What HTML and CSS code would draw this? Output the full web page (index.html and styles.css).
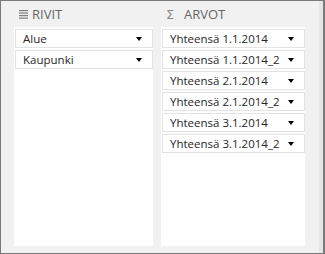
FILE: index.html
```html
<!DOCTYPE html>
<html lang="fi">
<head>
    <meta charset="UTF-8">
    <title>Kenttäluettelo</title>
    <link rel="stylesheet" href="styles.css">
</head>
<body>
    <div class="frame">
        <div class="areas">
            <div class="area">
                <div class="area-head">
                    <svg class="icon-rows" width="9" height="9" viewBox="0 0 9 9">
                        <rect x="0" y="0" width="9" height="1.2" fill="#7f7f7f"/>
                        <rect x="0" y="2.5" width="9" height="1.2" fill="#7f7f7f"/>
                        <rect x="0" y="5" width="9" height="1.2" fill="#7f7f7f"/>
                        <rect x="0" y="7.5" width="9" height="1.2" fill="#7f7f7f"/>
                    </svg>
                    <span class="area-title">RIVIT</span>
                </div>
                <div class="area-box">
                    <div class="field"><span>Alue</span><i class="arrow"></i></div>
                    <div class="field"><span>Kaupunki</span><i class="arrow"></i></div>
                </div>
            </div>
            <div class="area">
                <div class="area-head">
                    <span class="icon-sum">Σ</span>
                    <span class="area-title">ARVOT</span>
                </div>
                <div class="area-box">
                    <div class="field"><span>Yhteensä 1.1.2014</span><i class="arrow"></i></div>
                    <div class="field"><span>Yhteensä 1.1.2014_2</span><i class="arrow"></i></div>
                    <div class="field"><span>Yhteensä 2.1.2014</span><i class="arrow"></i></div>
                    <div class="field"><span>Yhteensä 2.1.2014_2</span><i class="arrow"></i></div>
                    <div class="field"><span>Yhteensä 3.1.2014</span><i class="arrow"></i></div>
                    <div class="field"><span>Yhteensä 3.1.2014_2</span><i class="arrow"></i></div>
                </div>
            </div>
        </div>
        <div class="strip"></div>
    </div>
</body>
</html>
```

FILE: styles.css
```css
body {
    margin: 0;
    font-family: 'Open Sans', 'Noto Sans', sans-serif;
}

.frame {
    box-sizing: border-box;
    width: 325px;
    height: 254px;
    border: 1px solid #7a7a7a;
    border-right-width: 2px;
    background: #f1f1f1;
    display: flex;
}

.areas {
    flex: 1;
    display: grid;
    grid-template-columns: 139px 144px;
    column-gap: 8px;
    padding-left: 13px;
}

.strip {
    width: 4px;
    background: #e6e6e6;
}

.area {
    display: flex;
    flex-direction: column;
}

.area-head {
    height: 26px;
    display: flex;
    align-items: center;
    padding-left: 5px;
    color: #666;
}

.icon-rows {
    margin-right: 4px;
    margin-top: 1px;
}

.icon-sum {
    font-family: 'DejaVu Sans', sans-serif;
    font-size: 13px;
    color: #8a8a8a;
    width: 9px;
    margin-right: 9px;
}

.area-title {
    font-size: 13px;
}

.area-box {
    height: 219px;
    box-sizing: border-box;
    background: #fff;
    padding: 2px 0 0 1px;
    display: flex;
    flex-direction: column;
    gap: 2px;
}

.field {
    box-sizing: border-box;
    height: 19px;
    border: 1px solid #e3e3e3;
    display: flex;
    align-items: center;
    justify-content: space-between;
    padding: 0 10px 0 7px;
    font-size: 11.5px;
    color: #262626;
}

.arrow {
    width: 0;
    height: 0;
    border-left: 3.5px solid transparent;
    border-right: 3.5px solid transparent;
    border-top: 4px solid #000;
}
```
